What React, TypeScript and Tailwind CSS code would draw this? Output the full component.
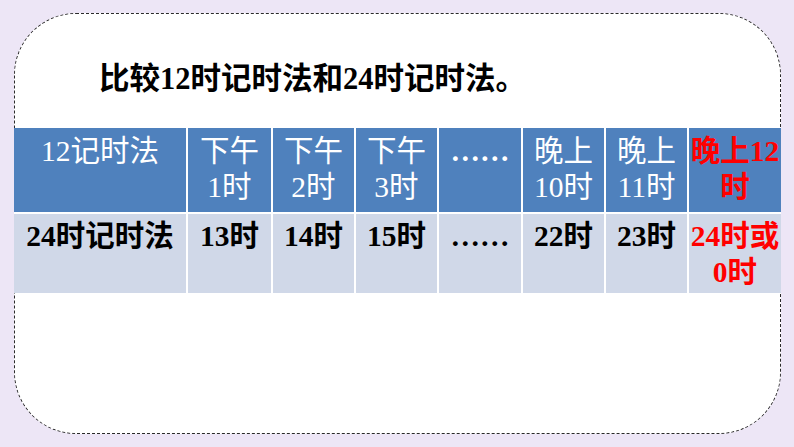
const font = { fontFamily: '"Liberation Serif", "Noto Sans CJK SC", serif' };

type Cell = { lines: string[]; red?: boolean; bold?: boolean };

const header: Cell[] = [
  { lines: ["12记时法"] },
  { lines: ["下午", "1时"] },
  { lines: ["下午", "2时"] },
  { lines: ["下午", "3时"] },
  { lines: ["……"], bold: true },
  { lines: ["晚上", "10时"] },
  { lines: ["晚上", "11时"] },
  { lines: ["晚上12", "时"], red: true, bold: true },
];

const body: Cell[] = [
  { lines: ["24时记时法"] },
  { lines: ["13时"] },
  { lines: ["14时"] },
  { lines: ["15时"] },
  { lines: ["……"] },
  { lines: ["22时"] },
  { lines: ["23时"] },
  { lines: ["24时或", "0时"], red: true },
];

export default function App() {
  return (
    <div
      className="w-[794px] h-[447px] bg-[#ede6f6] pt-[13px] pl-[14px] pr-[13px] pb-[13px] flex"
      style={font}
    >
      <div className="flex-1 bg-white border border-dashed border-[#2a2a2a] rounded-[62px] flex flex-col">
        <h1 className="mt-[47px] pl-[84px] text-[30.5px] leading-[36px] font-bold text-black">
          比较12时记时法和24时记时法。
        </h1>
        <div className="mt-[31px] -mx-px grid grid-cols-[172px_83px_81px_81px_82px_81px_81px_1fr] grid-rows-[84px_79px] gap-[2px] bg-white">
          {header.map((c, i) => (
            <div
              key={"h" + i}
              className={
                "bg-[#4f81bd] text-center text-[29.5px] leading-[36px] pt-[5px] whitespace-nowrap " +
                (c.red ? "text-[#ff0000] " : "text-white ") +
                (c.bold ? "font-bold" : "font-normal")
              }
            >
              {c.lines.map((l) => (
                <div key={l}>{l}</div>
              ))}
            </div>
          ))}
          {body.map((c, i) => (
            <div
              key={"b" + i}
              className={
                "bg-[#d0d8e8] text-center text-[29.5px] leading-[36px] pt-[4px] font-bold whitespace-nowrap " +
                (c.red ? "text-[#ff0000]" : "text-black")
              }
            >
              {c.lines.map((l) => (
                <div key={l}>{l}</div>
              ))}
            </div>
          ))}
        </div>
      </div>
    </div>
  );
}
